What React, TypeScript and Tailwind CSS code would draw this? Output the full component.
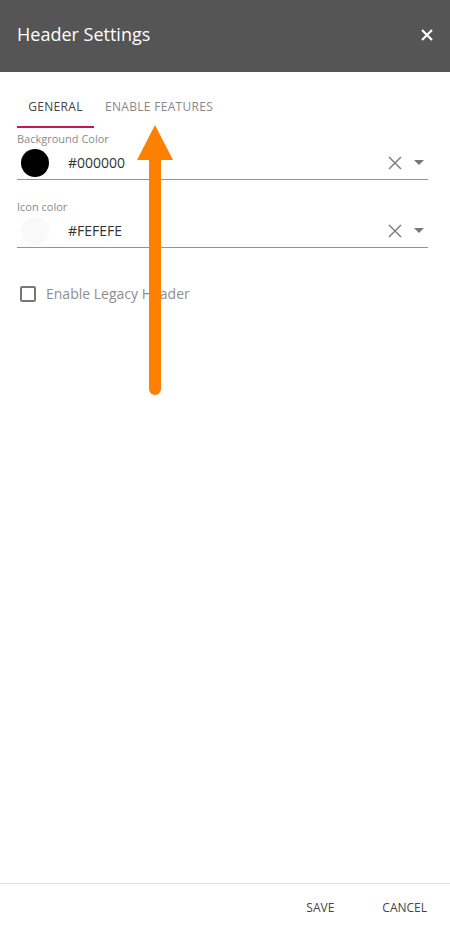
import React from "react";

const font = { fontFamily: '"Open Sans", "Noto Sans", sans-serif' };

function ColorField({ label, value, swatch }: { label: string; value: string; swatch: string }) {
  return (
    <div className="relative">
      <div className="text-[11px] leading-[14px] text-[#8a8a8a]">{label}</div>
      <div className="flex h-[34px] items-center border-b border-[#949494]">
        <span className={`ml-[4px] h-[28px] w-[28px] rounded-full ${swatch}`} />
        <span className="ml-[19px] flex-1 text-[14px] text-[#333]">{value}</span>
        <svg width="14" height="14" viewBox="0 0 14 14" className="mr-[12px]">
          <path d="M1 1L13 13M13 1L1 13" stroke="#777" strokeWidth="1.4" fill="none" />
        </svg>
        <svg width="10" height="6" viewBox="0 0 10 6" className="mr-[4px]">
          <path d="M0 0H10L5 5Z" fill="#777" />
        </svg>
      </div>
    </div>
  );
}

export default function App() {
  return (
    <div className="relative flex h-[936px] w-[450px] flex-col bg-white" style={font}>
      <header className="flex h-[72px] items-center justify-between bg-[#555555] pb-[3px] pl-[17px] pr-[17px]">
        <h1 className="text-[18px] text-white">Header Settings</h1>
        <svg width="12" height="12" viewBox="0 0 12 12">
          <path d="M1 1L11 11M11 1L1 11" stroke="#fff" strokeWidth="2.2" fill="none" />
        </svg>
      </header>

      <main className="flex-1 px-[17px]">
        <nav className="mt-[27px] flex text-[12px] uppercase leading-[16px] tracking-[0.3px]">
          <div className="w-[77px] border-b-2 border-[#c2185b] pb-[11px] text-center text-[#444]">General</div>
          <div className="ml-[11px] pb-[11px] text-[#888]">Enable Features</div>
        </nav>
        <div className="mt-[4px] flex flex-col gap-[20px] pr-[5px]">
          <ColorField label="Background Color" value="#000000" swatch="bg-black" />
          <ColorField label="Icon color" value="#FEFEFE" swatch="bg-[#f9f9f9]" />
        </div>
        <label className="mt-[36px] flex items-center gap-[10px] pl-[3px] text-[14px] leading-[20px] text-[#8e8e8e]">
          <span className="h-[16px] w-[16px] rounded-[2px] border-2 border-[#777]" />
          Enable Legacy Header
        </label>
      </main>

      <footer className="flex h-[53px] items-center justify-end gap-[48px] border-t border-[#dddddd] pb-[4px] pr-[23px] text-[12px] text-[#444]">
        <button className="uppercase">Save</button>
        <button className="uppercase">Cancel</button>
      </footer>

      <svg className="absolute left-[130px] top-[120px]" width="50" height="285" viewBox="0 0 50 285">
        <path d="M25 5L43 40H7Z" fill="#ff8000" />
        <line x1="25" y1="38" x2="25" y2="269" stroke="#ff8000" strokeWidth="12" strokeLinecap="round" />
      </svg>
    </div>
  );
}
